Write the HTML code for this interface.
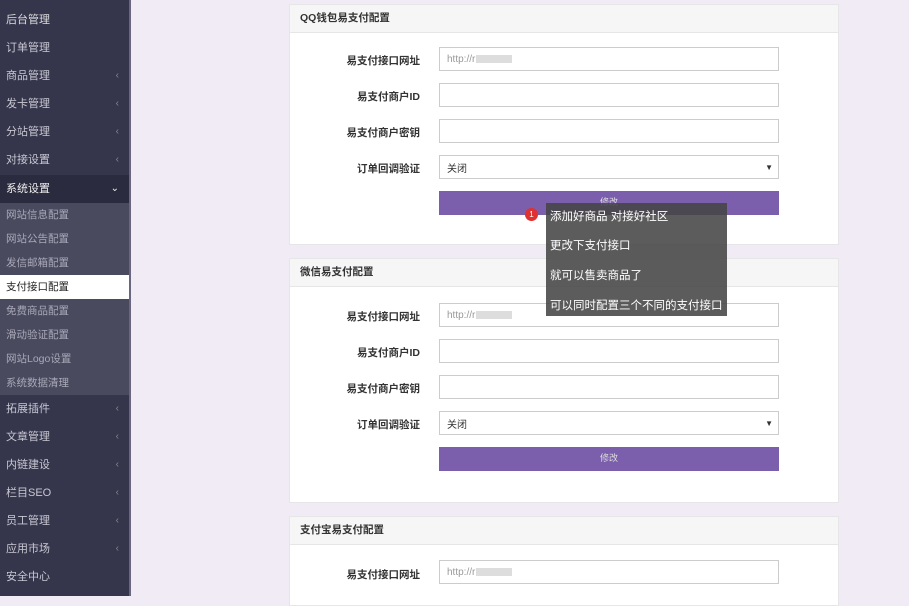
<!DOCTYPE html><html><head><meta charset="utf-8"><style>
*{margin:0;padding:0;box-sizing:border-box}
body{width:909px;height:596px;overflow:hidden;background:#f1ebf5;font-family:"Liberation Sans","Noto Sans CJK SC",sans-serif;position:relative}
.sb{position:absolute;left:0;top:0;width:131px;height:596px;background:#35354c;border-right:2px solid #6a6680}
.it{position:absolute;left:0;width:129px;height:28px;line-height:28px;padding-left:6px;font-size:11px;color:#c8c8d2}
.it .a{position:absolute;right:10px;top:0;color:#888;font-size:10px}
.sub{position:absolute;left:0;width:129px;height:24px;line-height:24px;padding-left:6px;font-size:10.5px;color:#a8a8b8;background:#4a4a5f}
.p{position:absolute;left:289px;width:550px;background:#fff;border:1px solid #e6e6e6}
.ph{height:28px;line-height:26px;background:#f6f6f6;border-bottom:1px solid #e6e6e6;padding-left:10px;font-size:10.5px;font-weight:bold;color:#333}
.lb{position:absolute;left:0;width:130px;text-align:right;font-size:10.5px;font-weight:bold;color:#333}
.in{position:absolute;left:149px;width:340px;height:24px;border:1px solid #ccc;font-size:10px;color:#999;padding-left:7px;display:flex;align-items:center}
.bl{display:inline-block;width:36px;height:8px;background:#ddd;margin-left:1px}
.bt{position:absolute;left:149px;width:340px;height:24px;background:#7b5fad;color:#ddd;font-size:9px;text-align:center;line-height:22px}
</style></head><body>
<div class="sb">
<div class="it" style="top:6px;color:#ddd">后台管理</div>
<div class="it" style="top:34px">订单管理</div>
<div class="it" style="top:62px">商品管理<span class="a">‹</span></div>
<div class="it" style="top:90px">发卡管理<span class="a">‹</span></div>
<div class="it" style="top:118px">分站管理<span class="a">‹</span></div>
<div class="it" style="top:146px">对接设置<span class="a">‹</span></div>
<div class="it" style="top:175px;background:#2b2b3f;color:#eee">系统设置<span class="a" style="color:#eee">⌄</span></div>
<div class="sub" style="top:203px">网站信息配置</div>
<div class="sub" style="top:227px">网站公告配置</div>
<div class="sub" style="top:251px">发信邮箱配置</div>
<div class="sub" style="top:275px;background:#fff;color:#222">支付接口配置</div>
<div class="sub" style="top:299px">免费商品配置</div>
<div class="sub" style="top:323px">滑动验证配置</div>
<div class="sub" style="top:347px">网站Logo设置</div>
<div class="sub" style="top:371px">系统数据清理</div>
<div class="it" style="top:395px">拓展插件<span class="a">‹</span></div>
<div class="it" style="top:423px">文章管理<span class="a">‹</span></div>
<div class="it" style="top:451px">内链建设<span class="a">‹</span></div>
<div class="it" style="top:479px">栏目SEO<span class="a">‹</span></div>
<div class="it" style="top:507px">员工管理<span class="a">‹</span></div>
<div class="it" style="top:535px">应用市场<span class="a">‹</span></div>
<div class="it" style="top:563px">安全中心</div>
</div>

<div class="p" style="top:4px;height:241px"><div class="ph">QQ钱包易支付配置</div>
<div class="lb" style="top:48px">易支付接口网址</div><div class="in" style="top:42px">http://r<span class="bl"></span></div>
<div class="lb" style="top:84px">易支付商户ID</div><div class="in" style="top:78px"></div>
<div class="lb" style="top:120px">易支付商户密钥</div><div class="in" style="top:114px"></div>
<div class="lb" style="top:156px">订单回调验证</div><div class="in" style="top:150px;color:#333">关闭<span style="position:absolute;right:5px;font-size:8px">▼</span></div>
<div class="bt" style="top:186px">修改</div></div>

<div class="p" style="top:258px;height:245px"><div class="ph">微信易支付配置</div>
<div class="lb" style="top:50px">易支付接口网址</div><div class="in" style="top:44px">http://r<span class="bl"></span></div>
<div class="lb" style="top:86px">易支付商户ID</div><div class="in" style="top:80px"></div>
<div class="lb" style="top:122px">易支付商户密钥</div><div class="in" style="top:116px"></div>
<div class="lb" style="top:158px">订单回调验证</div><div class="in" style="top:152px;color:#333">关闭<span style="position:absolute;right:5px;font-size:8px">▼</span></div>
<div class="bt" style="top:188px">修改</div></div>

<div class="p" style="top:516px;height:90px"><div class="ph">支付宝易支付配置</div>
<div class="lb" style="top:50px">易支付接口网址</div><div class="in" style="top:43px">http://r<span class="bl"></span></div></div>

<div style="position:absolute;left:546px;top:203px;width:181px;height:113px;background:rgba(70,70,70,.88);color:#fff;font-size:11.5px">
<div style="position:absolute;left:4px;top:5px">添加好商品 对接好社区</div>
<div style="position:absolute;left:4px;top:34px">更改下支付接口</div>
<div style="position:absolute;left:4px;top:64px">就可以售卖商品了</div>
<div style="position:absolute;left:4px;top:94px">可以同时配置三个不同的支付接口</div></div>
<div style="position:absolute;left:525px;top:208px;width:13px;height:13px;border-radius:50%;background:#e03030;color:#fff;font-size:8px;text-align:center;line-height:13px">1</div>
</body></html>
